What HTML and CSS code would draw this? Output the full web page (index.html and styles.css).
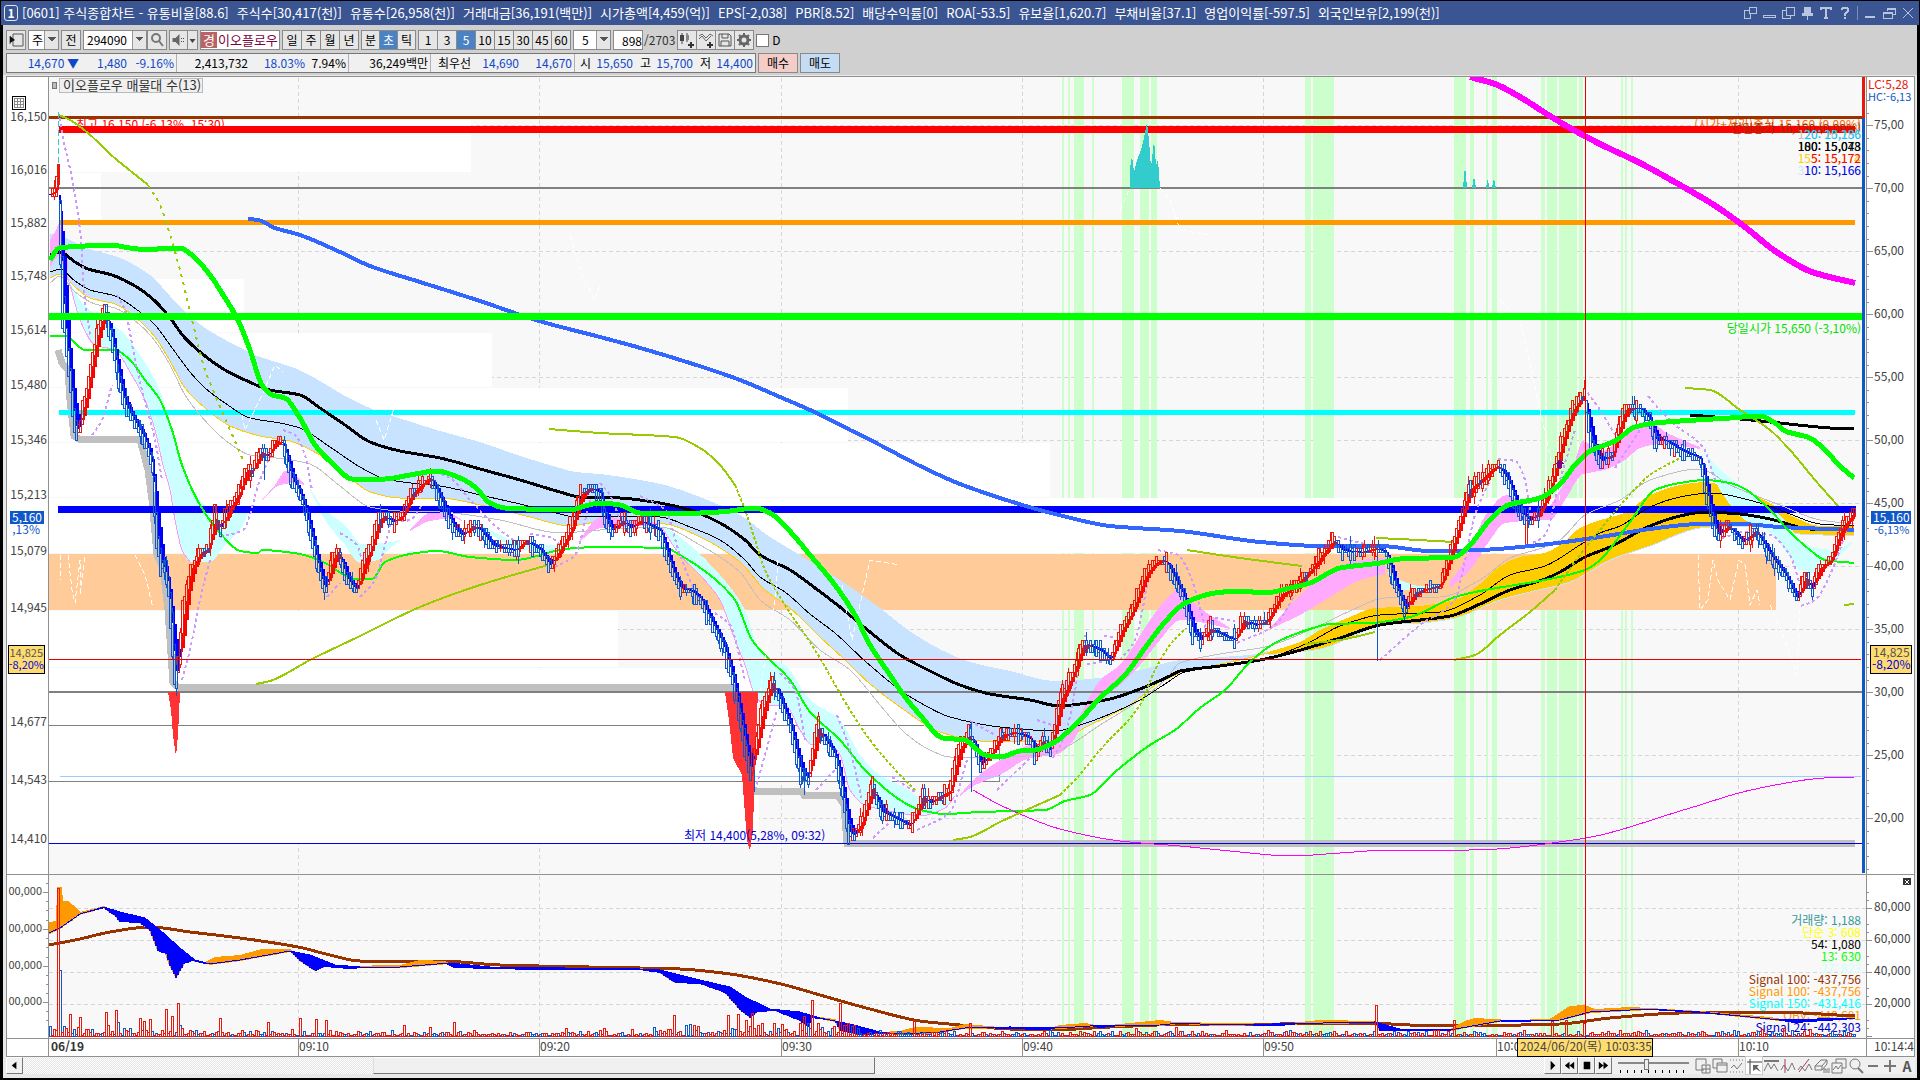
FILE: index.html
```html
<!DOCTYPE html>
<html lang="ko">
<head>
    <meta charset="UTF-8">
    <meta name="viewport" content="width=device-width, initial-scale=1.0">
    <title>[0601] 주식종합차트</title>
    <link rel="stylesheet" href="styles.css">
</head>
<body>
<div class="window">

    <!-- Title bar -->
    <header class="titlebar">
        <span class="win-no">1</span>
        <h1 class="title">
            <span>[0601] 주식종합차트 - 유통비율[88.6]</span>
            <span>주식수[30,417(천)]</span>
            <span>유통수[26,958(천)]</span>
            <span>거래대금[36,191(백만)]</span>
            <span>시가총액[4,459(억)]</span>
            <span>EPS[-2,038]</span>
            <span>PBR[8.52]</span>
            <span>배당수익률[0]</span>
            <span>ROA[-53.5]</span>
            <span>유보율[1,620.7]</span>
            <span>부채비율[37.1]</span>
            <span>영업이익률[-597.5]</span>
            <span>외국인보유[2,199(천)]</span>
        </h1>
        <div class="win-buttons">
            <button aria-label="분리"><svg viewBox="0 0 14 14"><path d="M6 1h7v6H6zM6 4H1v8h6V7"/></svg></button>
            <button aria-label="접기"><svg viewBox="0 0 14 14"><path d="M1 9h12v2H1z"/></svg></button>
            <button aria-label="복사"><svg viewBox="0 0 14 14"><path d="M5 1h8v8H5zM5 4H1v8h8V9"/></svg></button>
            <button aria-label="고정"><svg viewBox="0 0 14 14"><path d="M4 1h6v6h2v2H2V7h2z" fill="#b9c4de"/><path d="M7 9v5"/></svg></button>
            <button aria-label="글꼴"><svg viewBox="0 0 14 14"><path d="M2 4V2h10v2M7 2v10M5 12h4" stroke-width="2"/></svg></button>
            <button aria-label="도움말"><svg viewBox="0 0 14 14"><path d="M4 4V3l1-1h4l1 1v2L7 8v2M7 11v2" stroke-width="2"/></svg></button>
            <i class="sep"></i>
            <button aria-label="최소화"><svg viewBox="0 0 14 14"><path d="M2 11h10" stroke-width="2"/></svg></button>
            <button aria-label="이전 크기"><svg viewBox="0 0 14 14"><path d="M5 5V2h8v6h-3M1 6h9v6H1zM1 7h9M5 3h8"/></svg></button>
            <button aria-label="닫기"><svg viewBox="0 0 14 14"><path d="M2 2l10 10M12 2L2 12"/></svg></button>
        </div>
    </header>

    <main class="content">
        <!-- Stock and period toolbar -->
        <div class="toolbar">
            <button class="tb" aria-label="메뉴"><svg viewBox="0 0 16 16"><path d="M5 2h10v12H5V2M2 4v8" stroke="#555"/><path d="M2 4v7l5-3z" fill="#111"/></svg></button>
            <select class="w-kind" aria-label="종류"><option>주</option></select>
            <button class="tb">전</button>
            <span class="group">
                <select class="w-code" aria-label="종목코드"><option>294090</option></select>
                <button class="tb" aria-label="찾기"><svg viewBox="0 0 16 16"><circle cx="7" cy="6" r="4" stroke="#777" stroke-width="2"/><path d="M10 9l4 5" stroke="#777" stroke-width="2"/></svg></button>
            </span>
            <span class="group narrow">
                <button class="tb" aria-label="음성"><svg viewBox="0 0 16 16"><path d="M2 6h3l4-4v12l-4-4H2z" fill="#666"/><path d="M11 6v1M11 9v1M13 6v1M13 9v1" stroke="#444"/></svg></button>
                <button class="tb slim" aria-label="음성 설정"><svg viewBox="0 0 8 16"><path d="M1 7h6L4 11z" fill="#444"/></svg></button>
            </span>
            <span class="stock"><b>경</b>이오플로우</span>
            <span class="group">
                <button class="tb">일</button><button class="tb">주</button><button class="tb">월</button><button class="tb">년</button>
            </span>
            <span class="group narrow">
                <button class="tb">분</button><button class="tb on">초</button><button class="tb">틱</button>
            </span>
            <span class="group">
                <button class="tb">1</button><button class="tb">3</button><button class="tb on">5</button><button class="tb">10</button><button class="tb">15</button><button class="tb">30</button><button class="tb">45</button><button class="tb">60</button>
            </span>
            <select class="w-unit" aria-label="주기"><option>5</option></select>
            <label class="count"><input type="text" value="898" aria-label="봉 개수">/2703</label>
            <span class="group">
                <button class="tb" aria-label="종목추가"><svg viewBox="0 0 16 16"><path d="M3 1v11M8 1v9" stroke="#444"/><path d="M1 3h4v6H1z" fill="#444"/><path d="M7 3h3v5H7z" fill="#888"/><path d="M12 10v6M9 13h6" stroke="#333" stroke-width="2"/></svg></button>
                <button class="tb" aria-label="지표추가"><svg viewBox="0 0 16 16"><path d="M1 4l3-2 4 4 4-4 3 2M1 7l3-3 4 5 5-5" stroke="#666"/><path d="M12 10v6M9 13h6" stroke="#333" stroke-width="2"/></svg></button>
                <button class="tb" aria-label="저장"><svg viewBox="0 0 16 16"><path d="M2 2h10l2 2v10H2zM5 2v4h6V2M4 14V9h8v5" stroke="#555"/></svg></button>
                <button class="tb" aria-label="설정"><svg viewBox="0 0 16 16"><circle cx="8" cy="8" r="4" stroke="#666" stroke-width="3"/><path d="M8 1v3M8 12v3M1 8h3M12 8h3M3 3l2 2M11 11l2 2M13 3l-2 2M5 11l-2 2" stroke="#666" stroke-width="2"/></svg></button>
            </span>
            <label class="check"><input type="checkbox">D</label>
        </div>

        <!-- Quote line -->
        <div class="quote">
            <div class="quote-box">
                <span class="q blue q1">14,670 ▼</span>
                <span class="q blue q2">1,480</span>
                <span class="q blue q2 line">-9.16%</span>
                <span class="q q3">2,413,732</span>
                <span class="q blue q4">18.03%</span>
                <span class="q q5 line">7.94%</span>
                <span class="q q6 line">36,249백만</span>
                <span class="q q5">최우선</span>
                <span class="q blue q2">14,690</span>
                <span class="q blue q7 line">14,670</span>
                <span class="q q8">시</span>
                <span class="q blue q5">15,650</span>
                <span class="q q8">고</span>
                <span class="q blue q5">15,700</span>
                <span class="q q8">저</span>
                <span class="q blue q5">14,400</span>
            </div>
            <button class="buy">매수</button>
            <button class="sell">매도</button>
        </div>

        <!-- Price pane, volume pane and time axis, drawn by script.js -->
        <svg id="chart" class="chart" viewBox="6 76 1909 981" role="img" aria-label="이오플로우 5초 차트"></svg>

        <!-- Scroll bar and drawing tools -->
        <footer class="bottom">
            <button class="box" aria-label="왼쪽"><svg viewBox="0 0 16 16"><path d="M10 4v8L5 8z" fill="#000"/></svg></button>
            <div class="track"><div class="thumb"></div></div>
            <button class="box" aria-label="재생"><svg viewBox="0 0 16 16"><path d="M6 3v10l5-5z" fill="#000"/></svg></button>
            <button class="box" aria-label="뒤로"><svg viewBox="0 0 16 16"><path d="M8 4v8L3 8zM13 4v8L8 8z" fill="#000"/></svg></button>
            <button class="box" aria-label="정지"><svg viewBox="0 0 16 16"><path d="M5 4h7v8H5z" fill="#000"/></svg></button>
            <button class="box" aria-label="앞으로"><svg viewBox="0 0 16 16"><path d="M3 4v8l5-4zM8 4v8l5-4z" fill="#000"/></svg></button>
            <input class="speed" type="range" min="0" max="10" value="4" aria-label="속도">
            <div class="tools">
                <button aria-label="창 추가"><svg viewBox="0 0 16 16"><path d="M9 12H1V1h10v5M7 7h8v8H7zM11 7v8M7 11h8"/></svg></button>
                <button aria-label="창 겹침"><svg viewBox="0 0 16 16"><path d="M5 10H1V1h9v4M5 5h10v9H5zM5 7h10"/></svg></button>
                <button aria-label="범위"><svg viewBox="0 0 16 16"><path d="M1 2h14M1 14h14" stroke-dasharray="1 2"/><path d="M2 10l3-3 3 4 5-6"/></svg></button>
                <button class="on" aria-label="십자선"><svg viewBox="0 0 16 16"><path d="M1 4h15M4 1v15" stroke="#444"/><path d="M7 7h6l-2 2 4 5-5-3-3 2z" fill="#666" stroke="none"/></svg></button>
                <button aria-label="수평선"><svg viewBox="0 0 16 16"><path d="M1 3h15" stroke-width="2"/><path d="M1 13l4-8 3 6 3-5 4 7"/></svg></button>
                <button aria-label="수직선"><svg viewBox="0 0 16 16"><path d="M1 12l3-5 4 6 4-8 3 7"/><path d="M5 1v14" stroke="#a36"/></svg></button>
                <button aria-label="추세선"><svg viewBox="0 0 16 16"><path d="M1 12l3-4 4 5 4-7 3 6"/><path d="M2 14L12 1" stroke="#a36"/></svg></button>
                <button aria-label="전체 지우기"><svg viewBox="0 0 16 16"><path d="M1 8l6-6h6L8 8zM1 8v4h7l5-6V2M8 8v4M10 15v-4h2v4M14 10v5M16 10v5"/></svg></button>
                <button aria-label="차트 복사"><svg viewBox="0 0 16 16"><path d="M5 5V1h10v9h-4M1 5h10v10H1zM2 12l3-4 2 3 3-4"/></svg></button>
                <button aria-label="돋보기"><svg viewBox="0 0 16 16"><circle cx="7" cy="6" r="5"/><path d="M10 10l5 5" stroke-width="2"/></svg></button>
                <button aria-label="축소"><svg viewBox="0 0 16 16"><path d="M3 8h10" stroke-width="2"/></svg></button>
                <button aria-label="확대"><svg viewBox="0 0 16 16"><path d="M2 8h12M8 2v12" stroke-width="2"/></svg></button>
                <button class="letter">A</button>
            </div>
        </footer>
    </main>
</div>
<script src="script.js"></script>
</body>
</html>
```
FILE: styles.css
```css
* {
    box-sizing: border-box;
}

body {
    margin: 0;
    background: #000;
    color: #000;
    font: 12px/16px "Noto Sans CJK KR", sans-serif;
}

button, input, select {
    font: inherit;
    color: inherit;
    margin: 0;
    padding: 0;
    border-radius: 0;
}

svg {
    display: block;
    fill: none;
}

.window {
    padding: 1px 1px 3px;
}

/* Title bar */
.titlebar {
    display: flex;
    align-items: center;
    height: 24px;
    padding: 0 4px 0 3px;
    background: #3a5592;
    color: #fff;
}

.win-no {
    width: 14px;
    height: 16px;
    border: 1px solid #dfe6f5;
    border-radius: 3px;
    line-height: 14px;
    text-align: center;
    font-weight: bold;
}

.title {
    display: flex;
    flex: 1;
    gap: 8px;
    margin: 0 0 0 4px;
    font-size: 13px;
    font-weight: normal;
    white-space: nowrap;
}

.win-buttons {
    display: flex;
    align-items: center;
    gap: 5px;
}

.win-buttons button {
    width: 14px;
    height: 14px;
    border: 0;
    background: none;
}

.win-buttons svg {
    stroke: #b9c4de;
    shape-rendering: crispEdges;
}

.sep {
    width: 1px;
    height: 14px;
    background: #7c8db8;
}

.content {
    margin: 0 2px;
    padding: 5px 2px 4px 3px;
    background: linear-gradient(#d0d0d0 50px, #e8e8e8 50px);
}

/* Toolbar */
.toolbar {
    display: flex;
    align-items: center;
    gap: 2px;
    height: 20px;
}

.group {
    display: flex;
}

.tb {
    width: 20px;
    height: 20px;
    margin-right: -1px;
    border: 1px solid #8a8a8a;
    background: #e6e6e6;
    text-align: center;
}

.tb:last-child, .toolbar > .tb {
    margin-right: 0;
}

.narrow .tb {
    width: 19px;
}

.narrow .slim {
    width: 11px;
}

.tb svg {
    width: 100%;
    height: 16px;
}

.tb.on {
    background: #4a82c4;
    color: #fff;
}

.toolbar select {
    height: 20px;
    padding: 0 14px 0 3px;
    appearance: none;
    border: 1px solid #8a8a8a;
    background-image: linear-gradient(45deg, transparent 50%, #555 0), linear-gradient(-45deg, transparent 50%, #555 0), linear-gradient(90deg, #fff calc(100% - 14px), #999 0, #999 calc(100% - 13px), #e6e6e6 0);
    background-position: right 6px top 6px, right 2px top 6px, 0 0;
    background-size: 4px 4px, 4px 4px, 100% 100%;
    background-repeat: no-repeat;
}

.w-kind {
    width: 31px;
}

.w-code {
    width: 64px;
}

.toolbar .w-unit {
    width: 38px;
    padding-left: 8px;
}

.stock {
    display: flex;
    align-items: center;
    gap: 1px;
    width: 80px;
    height: 20px;
    border: 1px solid #8a8a8a;
    background: #fff;
    color: #800040;
    font-size: 13px;
    white-space: nowrap;
}

.stock b {
    width: 16px;
    background: #b86464;
    color: #fff;
    font-weight: normal;
    text-align: center;
}

.count {
    display: flex;
    align-items: center;
    gap: 1px;
    color: #333;
}

.count input {
    width: 30px;
    height: 20px;
    border: 1px solid #8a8a8a;
    color: #000;
    text-align: right;
}

.check {
    display: flex;
    align-items: center;
    gap: 3px;
}

.check input {
    width: 13px;
    height: 13px;
    appearance: none;
    border: 1px solid #777;
    background: #fff;
}

/* Quote line */
.quote {
    display: flex;
    gap: 2px;
    height: 20px;
    margin-top: 3px;
}

.quote-box {
    display: flex;
    width: 750px;
    border: 1px solid #777;
    background: #f0f0f0;
}

.q {
    height: 18px;
    padding-right: 2px;
    line-height: 18px;
    text-align: right;
    white-space: nowrap;
}

.line {
    border-right: 1px solid #b0b0b0;
}

.blue {
    color: #1048c8;
}

.q1 { width: 74px; }
.q2 { width: 48px; }
.q3 { width: 73px; }
.q4 { width: 57px; }
.q5 { width: 42px; }
.q6 { width: 82px; }
.q7 { width: 54px; }
.q8 { width: 18px; }

.buy, .sell {
    width: 40px;
    border: 1px solid #8a8a8a;
    background: #f4cdc8;
}

.sell {
    background: #c4dcf4;
}

/* Chart */
.chart {
    width: 100%;
    height: auto;
    margin-top: 3px;
    shape-rendering: crispEdges;
}

.chart text {
    font-size: 12px;
}

.chart .small {
    font-size: 11px;
}

/* Bottom bar */
.bottom {
    display: flex;
    align-items: center;
    height: 17px;
    background: #f0f0f0;
}

.box {
    width: 17px;
    height: 17px;
    border: 1px solid;
    border-color: #fff #777 #777 #fff;
    background: #f0f0f0;
}

.box svg {
    width: 15px;
    height: 15px;
}

.track {
    flex: 1;
    height: 17px;
    background: repeating-conic-gradient(#e4e4e4 0 25%, #fff 0 50%) 0 0 / 2px 2px;
}

.thumb {
    width: 33%;
    height: 17px;
    margin-left: 23%;
    border: 1px solid;
    border-color: #fff #777 #777 #ddd;
    background: #f0f0f0;
}

.speed {
    width: 71px;
    height: 17px;
    margin: 0 6px;
    appearance: none;
    background: repeating-linear-gradient(90deg, #000 0 1px, transparent 1px 7px) 2px 13px / 100% 3px no-repeat,
        linear-gradient(#888, #888) 0 5px / 100% 2px no-repeat;
}

.speed::-webkit-slider-thumb {
    appearance: none;
    width: 5px;
    height: 11px;
    margin-bottom: 3px;
    border: 1px solid #777;
    background: #eee;
}

.tools {
    display: flex;
    gap: 1px;
}

.tools button {
    width: 16px;
    height: 17px;
    border: 0;
    background: none;
}

.tools .on {
    background: #fff;
    outline: 1px solid #ccc;
}

.tools svg {
    width: 16px;
    height: 16px;
    stroke: #777;
}

.tools .letter {
    color: #555;
    font-size: 14px;
    font-weight: bold;
}
```
FILE: script.js
```javascript
const NS = 'http://www.w3.org/2000/svg';
const chart = document.getElementById('chart');

function add(tag, attrs, text) {
    const el = document.createElementNS(NS, tag);
    for (const key in attrs) el.setAttribute(key, attrs[key]);
    if (text !== undefined) el.textContent = text;
    chart.appendChild(el);
    return el;
}

function rect(x1, y1, x2, y2, fill, stroke) {
    add('rect', { x: x1, y: y1, width: x2 - x1, height: y2 - y1, fill: fill, stroke: stroke || 'none' });
}

function line(x1, y1, x2, y2, color, width, dash) {
    add('path', { d: `M${x1} ${y1}L${x2} ${y2}`, stroke: color, 'stroke-width': width || 1, 'stroke-dasharray': dash || 'none' });
}

function label(x, y, text, color, anchor, cls) {
    add('text', { x: x, y: y, fill: color || '#444', 'text-anchor': anchor || 'start', class: cls || '' }, text);
}

function parse(str) {
    return str.trim().split(/\s+/).map(p => p.split(',').map(Number));
}

// Monotone curve through the points
function curvePath(pts) {
    const n = pts.length;
    const s = [];
    for (let i = 0; i < n - 1; i++) s.push((pts[i + 1][1] - pts[i][1]) / (pts[i + 1][0] - pts[i][0] || 1));
    const m = pts.map((p, i) => {
        if (i === 0) return s[0];
        if (i === n - 1) return s[n - 2];
        return s[i - 1] * s[i] <= 0 ? 0 : 2 * s[i - 1] * s[i] / (s[i - 1] + s[i]);
    });
    let d = `M${pts[0]}`;
    for (let i = 0; i < n - 1; i++) {
        const h = (pts[i + 1][0] - pts[i][0]) / 3;
        d += `C${pts[i][0] + h},${pts[i][1] + m[i] * h} ${pts[i + 1][0] - h},${pts[i + 1][1] - m[i + 1] * h} ${pts[i + 1]}`;
    }
    return d;
}

function curve(str, color, width, dash) {
    add('path', { d: curvePath(parse(str)), stroke: color, 'stroke-width': width || 1, 'stroke-dasharray': dash || 'none' });
}

// Area between an upper and a lower curve
function cloud(top, bottom, fill) {
    const d = curvePath(parse(top)) + curvePath(parse(bottom).reverse()).replace('M', 'L') + 'Z';
    add('path', { d: d, fill: fill });
}

function valueAt(pts, x) {
    let i = 0;
    while (i < pts.length - 2 && pts[i + 1][0] < x) i++;
    const [x1, y1] = pts[i];
    const [x2, y2] = pts[i + 1];
    return y1 + (y2 - y1) * Math.min(1, Math.max(0, (x - x1) / (x2 - x1)));
}

let seed = 7;
function rnd() {
    seed = (seed * 16807) % 2147483647;
    return seed / 2147483647;
}

/* ---------- backgrounds ---------- */
rect(6, 76, 1915, 1057, '#fff');
rect(49, 77, 1867, 1038, '#f8f8f8');

const gridX = [298, 539, 781, 1022, 1263, 1496, 1738];
gridX.forEach(x => line(x + .5, 78, x + .5, 1038, '#d6d6d6', 1, '4 3'));
for (let i = 0; i < 12; i++) line(49, 125.5 + i * 63, 1861, 125.5 + i * 63, '#d6d6d6', 1, '4 3');
for (let i = 0; i < 4; i++) line(49, 908.5 + i * 32, 1866, 908.5 + i * 32, '#d6d6d6', 1, '4 3');

// signal zones
[[1062, 1064], [1068, 1070], [1074, 1084], [1092, 1094], [1122, 1134], [1140, 1149], [1151, 1157], [1305, 1311],
 [1313, 1334], [1454, 1466], [1470, 1474], [1486, 1488], [1492, 1497], [1541, 1545], [1547, 1557], [1559, 1577],
 [1579, 1583], [1621, 1623], [1625, 1627], [1631, 1633]].forEach(b => rect(b[0], 77, b[1], 1038, '#ccffcc'));

// volume profile
[[120, 172, 471], [173, 220, 101], [279, 332, 244], [333, 387, 492], [388, 442, 848], [443, 497, 1050],
 [498, 553, 1745], [611, 667, 618], [668, 725, 924], [726, 781, 999], [782, 843, 759]].forEach(b => rect(49, b[0], b[2], b[1], '#fff'));
rect(49, 554, 1776, 610, '#ffcc99');
line(49, 725.5, 924, 725.5, '#808080');
add('path', { d: 'M49 781.5H999.5V735', stroke: '#808080' });

/* ---------- clouds ---------- */
const cyan = '#ccffff', pink = '#ffaaff', sky = '#c8e3ff', gold = '#ffcc00';

const skyLow = '50,278 60,274 75,287 90,298 115,304 135,317 155,337 170,361 185,388 205,408 230,426 260,436 290,441 320,455 350,478 370,492 400,498 440,498 480,505 530,517 570,526 600,522 640,523 665,524 700,537 740,562 765,590 790,608 820,637 845,660 870,684 900,707 940,732 980,741 1020,742 1055,741 1090,725 1130,705 1160,682 1185,672 1240,660 1268,653';
cloud('50,234 59,235 70,240 92,250 115,256 150,275 170,296 187,313 205,328 235,345 260,357 295,368 320,381 345,396 372,409 405,420 440,431 480,442 520,456 560,468 575,472 600,474 640,480 665,485 700,497 740,515 770,537 800,555 840,580 880,608 900,624 930,644 970,662 1010,671 1055,681 1090,679 1140,670 1180,660 1250,655 1268,651', skyLow, sky);
curve(skyLow, gold, 1);

const goldLow = '1268,655 1320,649 1360,633 1385,624 1420,623 1455,618 1500,600 1530,592 1570,582 1610,560 1650,546 1700,528 1730,526 1760,527 1800,534 1854,536';
cloud('1268,652 1300,642 1320,630 1350,617 1375,608 1420,606 1455,600 1480,584 1500,566 1520,557 1545,553 1560,545 1580,528 1600,520 1625,513 1650,495 1680,485 1705,482 1730,488 1760,498 1790,515 1820,526 1854,525', goldLow, gold);
curve(goldLow, sky, 1);

cloud('62,265 80,300 100,318 120,330 140,355 155,380 165,405 178,450 190,485 210,508 232,511 250,508', '62,265 70,285 80,320 95,345 115,350 130,372 145,400 155,430 163,465 170,490 175,520 182,550 190,562 210,562 225,545 240,530 250,510', cyan);
curve('60,255 70,285 80,320 95,345 115,350 130,372 145,400 155,430 163,465 170,490 175,520 182,550 190,562', '#ff99ff', 1);
cloud('262,500 275,485 285,471 290,470 300,480 304,484', '262,501 280,485 295,483 304,485', pink);
cloud('308,485 325,510 345,525 362,544 385,543 400,540', '308,485 325,520 345,545 360,563 378,560 390,548 400,541', cyan);
cloud('410,530 425,515 435,510 450,513 462,520', '410,531 430,521 455,518 462,521', pink);
cloud('480,525 500,535 520,543 545,545 570,546', '480,528 500,540 525,550 550,553 570,547', cyan);
cloud('580,540 595,520 605,515 615,518 660,523', '580,541 600,528 640,526 660,525', pink);
cloud('50,240 56,230 60,222 64,235 68,262', '50,267 56,258 60,256 64,262 68,270', pink);
const dropLow = '662,528 680,555 700,575 720,600 735,640 745,665 755,695 765,705 785,705 800,730 812,745 825,740 840,755 850,790 865,805 900,813 920,816 945,808 955,796';
cloud('662,524 690,545 720,575 745,610 755,640 765,656 785,665 810,700 840,720 860,755 880,775 905,788 920,797 940,800 955,795', dropLow, cyan);
curve(dropLow, '#ff99ff', 1);
cloud('960,795 970,783 1000,760 1030,745 1060,740 1080,715 1100,680 1120,665 1150,620 1170,595 1180,588 1190,600 1210,615 1230,628', '960,796 975,785 1000,775 1030,758 1055,755 1070,745 1090,710 1120,685 1140,665 1160,640 1180,620 1200,622 1230,629', pink);
cloud('1270,628 1300,595 1330,570 1360,560 1385,558', '1270,629 1300,615 1330,597 1360,580 1385,574', pink);
cloud('1388,572 1400,580 1420,586 1440,585', '1388,573 1400,590 1420,590 1440,588', cyan);
cloud('1450,582 1465,560 1487,513 1507,495 1517,500 1530,512 1545,510 1560,490 1573,467 1583,441 1600,452 1621,438 1631,431 1652,423 1665,432 1700,447', '1450,588 1470,570 1490,540 1505,523 1525,521 1550,520 1565,500 1583,474 1605,470 1625,460 1640,448 1660,444 1700,449', pink);
cloud('1703,450 1720,470 1740,485 1760,500 1785,520 1800,540 1815,548 1835,550 1852,542', '1703,450 1720,490 1745,520 1765,528 1785,550 1800,570 1815,572 1835,560 1852,543', cyan);

/* ---------- low band ---------- */
const lowBand = { stroke: '#c0c0c0', 'stroke-width': 7 };
add('path', Object.assign({ d: 'M58 350L62 363L68 370L70 400L74 436L80 439.5H140L148 470L152 500L157 555L163 568L168 610L173 683L179 687.5H735' }, lowBand));
add('path', Object.assign({ d: 'M754 791.5H802L804 795.5H838L844 805L847 843.5H1855' }, lowBand));

/* ---------- horizontal levels ---------- */
line(49, 188, 1863, 188, '#808080', 2);
line(49, 692, 1863, 692, '#808080', 2);
line(60, 776.5, 1861, 776.5, '#99ccff');
line(49, 843.5, 1863, 843.5, '#0000e0');
label(76, 129, '최고 16,150 (-6,13%, 15:30)', '#f00');
label(1861, 129, '(시가+저가)중심 15,160 (0,00%)', '#f60', 'end');
line(49, 117.5, 1863, 117.5, '#993300', 3);
line(59, 129.5, 1855, 129.5, '#ff0000', 7);
line(59, 222.5, 1855, 222.5, '#ff9900', 5);
line(59, 412.5, 1855, 412.5, '#00ffff', 5);
line(58, 509.5, 1856, 509.5, '#0000ff', 7);

/* ---------- moving averages ---------- */
curve('50,283 60,276 75,292 95,304 115,308 140,325 155,341 170,365 185,395 200,415 225,440 250,455 285,459 310,464 340,486 370,507 400,511 440,512 500,520 560,533 600,530 660,527 700,545 740,572 760,600 790,620 820,650 850,670 880,705 905,733 930,750 950,757 1000,757 1040,755 1060,750 1100,725 1140,700 1165,680 1180,663 1220,654 1265,647 1310,630 1350,611 1385,598 1440,597 1480,580 1510,558 1545,547 1560,540 1585,515 1620,500 1650,480 1700,469 1730,485 1780,505 1820,520 1854,524', '#c0c0c0', 1);
curve('50,272 60,269 75,281 90,290 115,296 140,312 155,325 170,345 190,372 205,388 225,403 250,418 280,423 300,428 330,447 360,467 385,479 420,484 440,486 480,495 520,504 560,514 575,517 620,516 660,517 690,527 720,540 745,560 760,577 785,592 810,614 835,633 865,661 900,690 912,698 950,717 1000,727 1055,731 1080,725 1110,714 1140,700 1165,684 1185,672 1240,664 1275,656 1310,642 1340,626 1380,615 1440,612 1480,595 1510,575 1545,566 1580,545 1600,533 1620,526 1650,507 1680,497 1710,493 1760,503 1790,514 1820,524 1854,526', '#000', 1);
curve('50,255 60,252 75,262 88,269 112,275 135,286 155,301 170,318 185,338 205,356 225,370 245,380 270,390 300,395 320,408 345,425 370,442 400,451 440,458 480,469 520,480 560,492 580,497 620,498 660,503 690,510 720,523 745,540 760,555 790,570 815,588 840,607 870,632 900,655 930,671 960,685 990,694 1030,700 1060,706 1080,704 1110,699 1140,689 1170,676 1180,671 1220,666 1260,660 1290,653 1340,638 1380,625 1450,616 1480,604 1510,590 1545,579 1560,572 1585,557 1610,547 1650,526 1680,516 1705,512 1740,514 1770,519 1810,529 1854,530', '#000', 3);
curve('1690,415 1740,419 1780,423 1830,428 1854,429', '#000', 3);
curve('248,219 258,220 275,228 300,235 340,252 370,266 420,282 480,301 539,321 600,337 637,347 690,363 740,380 780,397 810,410 850,430 880,445 920,466 960,484 1029,507 1055,514 1110,526 1180,531 1260,542 1320,546 1380,546 1430,551 1480,550 1540,545 1600,537 1650,529 1700,524 1740,524 1780,527 1854,530', '#3366ff', 4);
curve('50,336 65,336 85,350 115,350 130,360 145,380 160,400 172,430 182,465 200,505 220,533 240,551 258,553 262,550 300,554 325,563 355,579 372,579 385,562 410,554 437,551 470,557 515,560 560,550 575,548 600,547 665,548 680,555 710,575 735,600 752,640 765,655 790,680 810,712 840,740 865,770 900,800 920,810 945,814 980,812 1045,810 1065,801 1090,795 1115,772 1150,745 1175,730 1200,708 1225,690 1250,662 1275,643 1310,629 1330,624 1370,623 1410,617 1455,597 1480,591 1550,579 1585,570 1600,560 1630,522 1655,490 1680,483 1705,480 1730,483 1745,489 1770,510 1790,532 1810,550 1825,560 1854,563', '#00ff00', 2);
curve('973,790 1000,805 1060,829 1120,841 1180,846 1240,852 1290,856 1340,853 1390,850 1430,850 1469,850 1580,839 1690,808 1751,790 1824,778 1855,777', '#ff00ff', 1);

/* ---------- trailing stop dots ---------- */
const olive = '#99cc00';
curve('59,115 70,120 88,133 110,154 148,185', olive, 2);
curve('148,185 160,205 167,225 180,270 192,320 205,370 213,390 243,460', olive, 2, '3 5');
['256,684 270,681 310,660 360,636 420,607 480,585 548,565', '549,429 600,433 675,437 700,448 720,465 735,485', '953,840 970,837 1000,822 1060,795',
 '1187,550 1240,558 1302,566', '1305,644 1340,640 1375,632', '1376,538 1400,539 1453,542', '1454,660 1475,655 1500,635 1530,612 1555,590',
 '1685,388 1710,390 1740,410 1770,430 1790,450 1815,480 1838,506', '1844,605 1854,604'].forEach(p => curve(p, olive, 2));
['735,485 745,510 755,540 765,570 785,605 815,650 850,710 870,740 900,775 917,792', '1060,795 1075,780 1100,750 1140,705 1155,670 1170,645 1186,628',
 '1555,590 1580,555 1600,530 1625,500 1650,475 1680,458'].forEach(p => curve(p, olive, 2, '3 2'));

['60,118 63,138 68,160 72,178 80,230 85,300 90,335', '117,295 125,310 135,360 142,390 155,440 162,480', '92,435 102,420 112,385',
 '182,680 190,650 200,600 210,560', '220,537 243,530 260,480 280,435', '283,430 295,435 305,455 312,490', '327,597 340,583',
 '340,533 357,545 362,560', '360,597 375,580 385,545 392,520', '395,522 410,520 422,505', '430,470 450,478 470,500 500,530 515,541',
 '530,534 550,537 560,545', '555,567 575,555 590,500', '600,483 610,495 620,520', '640,496 665,510 680,555 700,600 712,612',
 '715,613 730,625 745,680', '755,790 765,755 777,710', '780,673 795,690 805,740', '816,790 835,770', '837,715 850,750 862,800',
 '873,838 890,822', '892,777 915,792', '917,830 950,812 967,760', '970,721 995,735', '997,790 1030,758', '1037,720 1052,725',
 '1053,758 1065,735 1085,635', '1087,664 1105,661', '1104,636 1116,637', '1120,660 1135,640 1150,570', '1158,550 1178,555 1190,575 1202,615 1208,638',
 '1215,618 1235,621', '1237,643 1275,625 1295,595', '1338,537 1368,545', '1380,660 1420,625 1455,600 1465,560 1475,515 1490,480',
 '1498,459 1515,461 1525,480 1530,510', '1533,543 1545,535 1560,480 1575,430', '1584,388 1600,410 1615,435', '1615,468 1640,430',
 '1648,396 1660,410 1675,425 1703,447 1715,480', '1722,538 1745,532 1770,535 1790,555 1800,585', '1801,606 1815,600 1830,575 1850,520']
    .forEach(p => curve(p, '#cc99ff', 2, '3 3'));

/* ---------- spikes ---------- */
add('path', { d: 'M168 692H180L178 735L176 757L173 735L171 710Z', fill: '#ff3333' });
add('path', { d: 'M725 692H758L755 760L753 830L750 851L747 840L742 775L733 758L729 720Z', fill: '#ff3333' });
add('path', { d: 'M1130 188V168L1132 156L1134 172L1137 160L1141 150L1144 138L1147 122L1149 140L1151 168L1154 140L1156 165L1158 160L1160 188Z', fill: '#33cccc' });
add('path', { d: 'M1463 188L1465 165L1467 188ZM1472 188L1474 176L1476 188ZM1486 188L1488 178L1489 188ZM1492 188L1494 178L1496 188Z', fill: '#33cccc' });
line(58.5, 112, 58.5, 165, '#33cccc', 1, '6 3');

// faint dashed series
['60,555 61,580', '68,555 72,590 75,603 80,560 80,595 85,555', '135,555 145,575 153,608', '242,415 245,430 262,395 275,365 283,372', '376,420 384,440 395,405',
 '570,235 582,275 595,300 600,285', '778,560 775,600 760,690', '842,585 852,640 870,560 900,565', '1120,210 1130,188', '1160,188 1170,200 1180,230 1210,235',
 '1500,300 1520,320 1560,500', '1698,555 1700,610 1708,600 1713,560 1718,580 1730,600 1739,560 1745,565 1750,605 1757,590 1760,605', '1770,605 1785,640 1797,675 1800,600']
    .forEach(p => add('path', { d: 'M' + parse(p).join('L'), stroke: '#fff', 'stroke-dasharray': '5 3' }));

/* ---------- price ---------- */
const price = parse('49,195 55,190 58,175 60,230 62,290 66,340 70,380 75,430 80,425 83,405 85,400 92,360 98,330 105,308 108,325 112,340 118,378 125,405 135,422 145,440 152,465 156,530 160,560 167,575 171,620 175,680 179,660 182,620 190,570 200,552 208,548 215,515 220,528 228,510 240,490 245,470 252,470 260,452 268,455 275,440 283,443 290,475 298,490 305,510 313,545 320,575 325,590 332,560 338,550 345,575 352,585 357,590 364,560 370,550 378,520 384,515 392,522 402,515 410,495 420,485 430,477 436,490 445,510 455,530 463,535 472,525 480,530 492,545 505,548 515,550 525,540 540,550 550,565 560,548 570,530 580,495 590,487 600,492 605,520 612,530 622,520 630,528 640,520 650,525 660,530 665,550 672,570 680,588 690,590 700,598 708,615 718,635 725,650 735,690 742,730 750,770 755,750 762,710 772,680 780,700 790,725 800,770 808,778 817,725 825,740 835,755 842,790 848,830 854,835 862,820 872,785 880,810 890,815 900,820 910,825 917,810 922,795 930,803 940,795 950,790 958,750 968,735 975,745 980,765 990,755 1000,735 1015,732 1030,738 1035,755 1042,740 1050,750 1060,700 1072,675 1082,645 1090,645 1100,650 1110,660 1120,632 1132,610 1145,575 1155,562 1165,560 1175,580 1183,595 1192,630 1200,640 1210,628 1222,635 1235,640 1242,620 1255,625 1267,620 1280,595 1295,585 1310,570 1325,550 1333,540 1342,550 1360,552 1375,548 1386,552 1393,580 1405,610 1412,595 1420,590 1440,585 1448,560 1460,520 1468,490 1480,480 1490,470 1498,465 1508,480 1518,510 1530,520 1540,510 1552,480 1562,440 1572,410 1580,398 1585,395 1590,440 1600,460 1612,455 1618,430 1625,408 1640,408 1650,420 1655,440 1665,440 1680,450 1700,458 1706,490 1712,520 1718,535 1728,525 1742,542 1755,530 1770,555 1785,575 1797,600 1805,575 1812,590 1817,570 1830,560 1840,530 1855,510');

const closes = [];
for (let x = 50; x <= 1855; x += 2) closes.push([x, valueAt(price, x)]);

function average(i, n) {
    let sum = 0;
    for (let k = 0; k < n; k++) sum += closes[Math.max(0, i - k)][1];
    return sum / n;
}

// ribbon between the fast and slow averages
let up = '', down = '';
closes.forEach(([x], i) => {
    const a = Math.round(average(i, 2)), b = Math.round(average(i, 6));
    const seg = `M${x} ${Math.min(a, b)}V${Math.max(a, b) + 1}`;
    if (a < b) up += seg; else down += seg;
});
add('path', { d: up, stroke: '#ff0000', 'stroke-width': 2 });
add('path', { d: down, stroke: '#0000ff', 'stroke-width': 2 });

// candles, one tick is 4px
let red = '', blue = '';
for (let i = 1; i < closes.length; i++) {
    const x = closes[i][0];
    const jump = closes[i][1] - closes[i - 1][1];
    const rise = jump + (rnd() - .5) * 5 < 0;
    const size = Math.max(4, Math.round((Math.abs(jump) + 3 + rnd() * rnd() * 18) / 4) * 4);
    const top = Math.round((closes[i][1] - size / 2) / 4) * 4;
    const bottom = top + size;
    let d = `M${x - .5} ${top + .5}h2V${bottom + .5}h-2Z`;
    if (rnd() > .7) d += `M${x + .5} ${top - Math.round(rnd() * 2) * 4}V${top}M${x + .5} ${bottom}v${Math.round(rnd() * 2) * 4}`;
    if (rise) red += d; else blue += d;
}
blue += 'M1377.5 555V661M971.5 722V792M264.5 455V480M754.5 770V792M804.5 770V795';
red += 'M1525.5 515V544M1527.5 515V544M58.5 165V185';
add('path', { d: red, stroke: '#e8180c' });
add('path', { d: blue, stroke: '#1058c8' });
add('path', { d: 'M1560 459l4 5h-2v4h-5v-4h-2z', fill: '#800080' });

// thick lines run over the candles
curve('50,260 59,248 85,246 110,245 130,248 150,250 165,248 180,248 195,258 210,275 225,298 237,318 250,350 262,385 272,395 285,398 300,418 315,445 335,466 352,479 385,479 410,475 437,471 460,478 475,487 490,503 505,508 570,510 585,506 600,503 620,505 640,513 700,513 730,511 755,508 770,513 785,526 810,555 835,585 855,615 870,645 890,675 905,697 920,715 943,738 965,740 975,748 985,755 1000,757 1020,751 1035,750 1055,742 1080,720 1100,698 1125,675 1145,648 1165,622 1185,603 1215,593 1240,591 1265,593 1290,588 1310,583 1340,568 1380,563 1400,559 1455,557 1470,545 1490,520 1508,505 1540,498 1560,484 1575,465 1590,451 1615,441 1635,427 1655,423 1680,421 1730,418 1760,416 1775,423 1785,431 1810,438 1825,450 1840,466 1854,478', '#00ff00', 5);
curve('1470,77 1495,84 1520,97 1550,116 1570,128 1600,144 1640,163 1680,185 1714,205 1745,227 1775,251 1812,272 1855,283', '#ff00ff', 6);
line(49, 316.5, 1863, 316.5, '#00ff00', 7);

label(1861, 333, '당일시가 15,650 (-3,10%)', '#00e000', 'end');
label(684, 840, '최저 14,400(5,28%, 09:32)', '#0000d0');

// average read-outs, stacked over one another
label(1861, 133, '전일종가 16,150 (0,00%)', '#993300', 'end');
label(1861, 139, '120: 20,286', '#c0c0c0', 'end');
label(1861, 139, '20: 15,156', '#00ccff', 'end');
label(1861, 151, '100: 15,043', '#000', 'end');
label(1861, 151, '180: 15,078', '#000', 'end');
label(1861, 163, '155: 15,174', '#ffcc00', 'end');
label(1861, 163, '5: 15,172', '#f00', 'end');
label(1861, 175, '310: 15,166', '#c8e3ff', 'end');
label(1861, 175, '10: 15,166', '#0000e0', 'end');

/* ---------- volume pane ---------- */
const signal = parse('49,933 60,928 80,914 104,907 120,912 145,918 160,930 180,948 195,960 210,964 240,960 290,951 310,955 335,965 360,967 400,967 450,963 490,967 640,969 660,970 700,980 730,987 745,997 770,1009 800,1012 820,1018 850,1024 880,1032 900,1034 940,1032 965,1028 1010,1027 1060,1028 1090,1026 1160,1025 1180,1023 1220,1025 1375,1022 1400,1029 1450,1030 1500,1021 1560,1020 1590,1012 1650,1009 1700,1012 1780,1020 1855,1018');
const obv = parse('49,923 57,922 58,888 61,888 62,902 68,902 75,908 80,913 104,907 110,912 115,915 120,921 140,922 150,930 158,950 166,953 170,965 176,977 184,963 192,960 205,963 215,958 240,956 262,950 290,950 300,960 315,970 325,966 350,968 380,966 400,966 420,961 445,962 455,967 490,968 540,969 640,969 660,972 675,982 700,983 725,992 740,1009 750,1017 757,1011 775,1010 800,1020 808,1026 812,1017 835,1020 840,1030 860,1034 900,1032 915,1028 950,1029 965,1025 1000,1028 1050,1029 1060,1026 1085,1024 1100,1027 1130,1024 1160,1021 1175,1023 1280,1025 1320,1021 1375,1022 1380,1030 1450,1030 1465,1022 1475,1019 1510,1021 1550,1020 1570,1007 1585,1006 1595,1010 1630,1008 1650,1009 1700,1012 1770,1018 1795,1022 1855,1018');

[['거래량: 1,188', '#399'], ['단순 3: 608', '#ff0'], ['54: 1,080', '#000'], ['13: 630', '#0f0'], ['27: 823', '#cff'],
 ['Signal 100: -437,756', '#930'], ['Signal 100: -437,756', '#f90'], ['Signal 150: -431,416', '#0ff'],
 ['OBV: -440,681', '#f90'], ['Signal 24: -442,303', '#00c']].forEach((t, i) => label(1861, 925 + i * 12 - (i > 4 ? 1 : 0), t[0], t[1], 'end'));

curve('49,945 80,939 110,932 150,927 190,932 240,938 298,947 330,955 360,961 440,961 500,965 640,968 680,969 730,974 781,984 820,995 870,1009 920,1021 960,1025 1010,1029 1050,1030 1110,1027 1200,1024 1280,1024 1360,1023 1440,1026 1560,1024 1610,1018 1680,1013 1770,1012 1855,1016', '#993300', 3);

let above = '', below = '';
for (let x = 50; x < 1856; x += 2) {
    const s = Math.round(valueAt(signal, x)), o = Math.round(valueAt(obv, x));
    if (o < s) above += `M${x} ${o}V${s + 1}`; else below += `M${x} ${s}V${o + 1}`;
}
add('path', { d: 'M' + obv.join('L'), stroke: '#ff9900', 'stroke-width': 2 });
add('path', { d: above, stroke: '#ff9900', 'stroke-width': 2 });
add('path', { d: below, stroke: '#0000ff', 'stroke-width': 2 });
add('path', { d: 'M' + signal.join('L'), stroke: '#0000ff' });

// volume bars
const peaks = { 58: 148, 60: 66, 70: 22, 80: 19, 106: 24, 116: 26, 140: 18, 150: 17, 166: 27, 172: 20, 178: 33, 220: 18, 268: 14, 300: 18, 316: 17, 326: 16, 404: 11, 430: 9, 454: 14, 566: 8, 604: 8, 632: 7, 674: 21, 728: 21, 738: 22, 746: 16, 752: 23, 774: 13, 804: 20, 812: 36, 840: 33, 848: 13, 914: 16, 970: 13, 1136: 8, 1176: 9, 1202: 5, 1376: 31, 1454: 16, 1552: 15, 1566: 16, 1584: 13, 1620: 6, 1762: 7, 1784: 8, 1810: 7 };
red = '';
blue = '';
for (let x = 50; x < 1855; x += 2) {
    const busy = x < 210 || (x > 650 && x < 860) ? 14 : 6;
    const h = peaks[x] || 1 + Math.round(rnd() * rnd() * busy);
    const d = `M${x - .5} 1036.5v${-h}h2v${h}Z`;
    if (rnd() > .45 && x !== 60 || (peaks[x] && x !== 60)) red += d; else blue += d;
}
add('path', { d: blue, stroke: '#1058c8' });
add('path', { d: red, stroke: '#e8180c' });

/* ---------- crosshair ---------- */
line(49, 659.5, 1861, 659.5, '#e80000');
line(1585.5, 77, 1585.5, 1038, '#e80000');

/* ---------- frame and axes ---------- */
rect(1862, 77, 1865, 118, '#e8180c');
rect(1862, 118, 1865, 873, '#1058c8');
add('path', { d: 'M6.5 76.5H1914.5V1056.5H6.5ZM48.5 76V1057M1866.5 77V1057M7 874.5H1914M7 1038.5H1914', stroke: '#909090' });

['16,150', '16,016', '15,882', '15,748', '15,614', '15,480', '15,346', '15,213', '15,079', '14,945', '14,677', '14,543', '14,410']
    .forEach((t, i) => label(47, [121, 174, 227, 280, 334, 389, 444, 499, 555, 612, 726, 784, 843][i], t, '#444', 'end'));
for (let i = 0; i < 12; i++) label(1874, 129 + i * 63, `${75 - i * 5},00`);
let ticks = '';
for (let y = 125; y < 870; y += 63) ticks += `M1867 ${y + .5}h6`;
for (let y = 100; y < 870; y += 12.6) ticks += `M1867 ${Math.round(y) + .5}h2`;
for (let i = 0; i < 5; i++) ticks += `M1867 ${908.5 + i * 32}h5M1867 ${892.5 + i * 32}h2M1867 ${900.5 + i * 32}h2`;
[892, 929, 966, 1002].forEach(y => {
    ticks += `M43 ${y + .5}h5M46 ${y - 8.5}h2M46 ${y + 9.5}h2M46 ${y + 18.5}h2`;
    label(42, y + 3, '00,000', '#444', 'end', 'small');
});
add('path', { d: ticks, stroke: '#909090' });
for (let i = 0; i < 4; i++) label(1874, 911 + i * 32, `${80 - i * 20},000`);

label(1868, 89, 'LC:5,28', '#e8180c');
label(1868, 101, 'HC:-6,13', '#1058c8', 'start', 'small');

// price tags
rect(10, 511, 44, 524, '#1058c8');
label(42, 522, '5,160', '#fff', 'end');
label(40, 534, ',13%', '#1058c8', 'end');
rect(1871, 511, 1911, 524, '#1058c8');
label(1873, 522, '15,160', '#fff');
label(1874, 534, '-6,13%', '#1058c8', 'start', 'small');
rect(8.5, 645.5, 44.5, 673.5, '#ffdc70', '#000');
label(43, 657, '14,825', '#555', 'end', 'small');
label(44, 669, '-8,20%', '#0000e0', 'end', 'small');
rect(1870.5, 645.5, 1911.5, 673.5, '#ffdc70', '#000');
label(1873, 657, '14,825', '#555');
label(1872, 669, '-8,20%', '#0000e0');

// legend and pane icons
rect(52.5, 82.5, 56.5, 88.5, '#bbb', '#777');
rect(59.5, 78.5, 202.5, 92.5, '#f0f0f0', '#bbb');
add('text', { x: 63, y: 90, fill: '#333', style: 'font-size:13px' }, '이오플로우 매물대 수(13)');
rect(12.5, 96.5, 25.5, 109.5, '#fff', '#000');
add('path', { d: 'M14.5 98.5h9v9h-9zM17.5 98v10M20.5 98v10M14 101.5h10M14 104.5h10', stroke: '#888' });
rect(1903, 878, 1911, 885, '#333');
add('path', { d: 'M1905 880l4 4M1909 880l-4 4', stroke: '#fff' });

// time axis
gridX.forEach((x, i) => {
    line(x + .5, 1038, x + .5, 1057, '#909090');
    label(x + 1, 1051, ['09:10', '09:20', '09:30', '09:40', '09:50', '10:0', '10:10'][i]);
});
add('text', { x: 51, y: 1051, fill: '#333', 'font-weight': 'bold' }, '06/19');
label(1874, 1051, '10:14:4');
rect(1517.5, 1038.5, 1652.5, 1056.5, '#ffdc70', '#000');
label(1520, 1051, '2024/06/20(목) 10:03:35', '#444');
```
